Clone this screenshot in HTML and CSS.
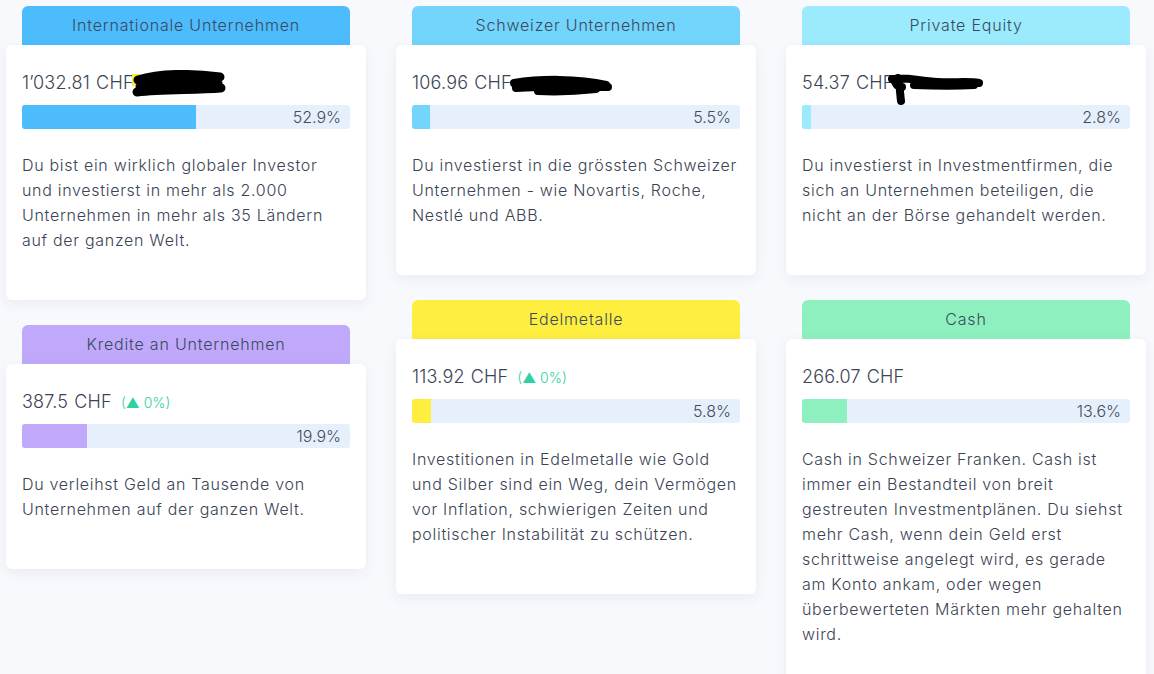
FILE: index.html
```html
<!DOCTYPE html>
<html lang="de">
<head>
    <meta charset="UTF-8">
    <meta name="viewport" content="width=device-width, initial-scale=1.0">
    <title>Portfolio Aufteilung</title>
    <link rel="stylesheet" href="styles.css">
</head>
<body>
    <div class="funds">
        <div class="column">
            <div class="fund">
                <div class="fund-head head-intl">Internationale Unternehmen</div>
                <div class="fund-body">
                    <div class="amount">1’032.81<span class="currency">CHF</span><svg class="scribble scribble-1" width="94" height="28" viewBox="0 0 94 28"><rect x="0" y="4" width="8" height="12" fill="#f4ec3a"/><path d="M6 10 C 25 4, 55 3, 88 7 M8 17 C 30 12, 60 12, 86 13 M5 22 C 30 19, 60 20, 89 18" stroke="#000" stroke-width="9" stroke-linecap="round" fill="none"/></svg></div>
                    <div class="bar">
                        <div class="bar-fill fill-intl" style="width: 52.9%"></div>
                        <span class="bar-label">52.9%</span>
                    </div>
                    <p class="desc">Du bist ein wirklich globaler Investor und investierst in mehr als 2.000 Unternehmen in mehr als 35 Ländern auf der ganzen Welt.</p>
                </div>
            </div>
            <div class="fund">
                <div class="fund-head head-credit">Kredite an Unternehmen</div>
                <div class="fund-body">
                    <div class="amount">387.5<span class="currency">CHF</span><span class="change">(▲ 0%)</span></div>
                    <div class="bar">
                        <div class="bar-fill fill-credit" style="width: 19.9%"></div>
                        <span class="bar-label">19.9%</span>
                    </div>
                    <p class="desc">Du verleihst Geld an Tausende von Unternehmen auf der ganzen Welt.</p>
                </div>
            </div>
        </div>

        <div class="column">
            <div class="fund">
                <div class="fund-head head-swiss">Schweizer Unternehmen</div>
                <div class="fund-body">
                    <div class="amount">106.96<span class="currency">CHF</span><svg class="scribble scribble-2" width="106" height="22" viewBox="0 0 106 22"><path d="M6 9 C 30 5, 70 4, 98 11 M8 14 C 40 12, 70 13, 100 13 M30 17 C 50 18, 70 17, 88 15" stroke="#000" stroke-width="8" stroke-linecap="round" fill="none"/></svg></div>
                    <div class="bar">
                        <div class="bar-fill fill-swiss" style="width: 5.5%"></div>
                        <span class="bar-label">5.5%</span>
                    </div>
                    <p class="desc">Du investierst in die grössten Schweizer Unternehmen - wie Novartis, Roche, Nestlé und ABB.</p>
                </div>
            </div>
            <div class="fund">
                <div class="fund-head head-metal">Edelmetalle</div>
                <div class="fund-body">
                    <div class="amount">113.92<span class="currency">CHF</span><span class="change">(▲ 0%)</span></div>
                    <div class="bar">
                        <div class="bar-fill fill-metal" style="width: 5.8%"></div>
                        <span class="bar-label">5.8%</span>
                    </div>
                    <p class="desc">Investitionen in Edelmetalle wie Gold und Silber sind ein Weg, dein Vermögen vor Inflation, schwierigen Zeiten und politischer Instabilität zu schützen.</p>
                </div>
            </div>
        </div>

        <div class="column">
            <div class="fund">
                <div class="fund-head head-pe">Private Equity</div>
                <div class="fund-body">
                    <div class="amount">54.37<span class="currency">CHF</span><svg class="scribble scribble-3" width="96" height="34" viewBox="0 0 96 34"><path d="M4 7 C 20 5, 30 9, 50 10 C 65 11, 80 9, 91 11 M26 13 C 50 14, 70 14, 86 13 M10 6 C 12 14, 12 22, 13 29 M6 8 C 8 12, 9 15, 14 15" stroke="#000" stroke-width="8" stroke-linecap="round" fill="none"/></svg></div>
                    <div class="bar">
                        <div class="bar-fill fill-pe" style="width: 2.8%"></div>
                        <span class="bar-label">2.8%</span>
                    </div>
                    <p class="desc">Du investierst in Investmentfirmen, die sich an Unternehmen beteiligen, die nicht an der Börse gehandelt werden.</p>
                </div>
            </div>
            <div class="fund">
                <div class="fund-head head-cash">Cash</div>
                <div class="fund-body">
                    <div class="amount">266.07<span class="currency">CHF</span></div>
                    <div class="bar">
                        <div class="bar-fill fill-cash" style="width: 13.6%"></div>
                        <span class="bar-label">13.6%</span>
                    </div>
                    <p class="desc">Cash in Schweizer Franken. Cash ist immer ein Bestandteil von breit gestreuten Investmentplänen. Du siehst mehr Cash, wenn dein Geld erst schrittweise angelegt wird, es gerade am Konto ankam, oder wegen überbewerteten Märkten mehr gehalten wird.</p>
                </div>
            </div>
        </div>
    </div>
</body>
</html>
```

FILE: styles.css
```css
body {
    margin: 0;
    background-color: #f8f9fd;
    font-family: Inter, "Open Sans", sans-serif;
    font-weight: 300;
    color: #3b4354;
}
.funds {
    display: flex;
    gap: 30px;
    padding: 6px;
    align-items: flex-start;
}
.column {
    width: 360px;
    display: flex;
    flex-direction: column;
    gap: 25px;
}
.fund-head {
    margin: 0 16px;
    height: 39px;
    line-height: 39px;
    text-align: center;
    font-size: 16px;
    letter-spacing: 0.8px;
    color: #3a4a5e;
    border-radius: 6px 6px 0 0;
}
.head-intl { background-color: #4dbcfd; }
.head-swiss { background-color: #73d4fc; }
.head-pe { background-color: #9bebfc; }
.head-credit { background-color: #c0a9fb; }
.head-metal { background-color: #fdee40; }
.head-cash { background-color: #8ff0bf; }

.fund-body {
    background-color: #fff;
    border-radius: 6px;
    padding: 24px 16px 47px;
    box-shadow: 0 4px 14px rgba(40, 50, 90, 0.07);
}
.amount {
    height: 28px;
    line-height: 28px;
    font-size: 18px;
    letter-spacing: 0.2px;
    color: #3b4354;
    margin-bottom: 8px;
    white-space: nowrap;
}
.currency {
    margin-left: 6px;
}
.change {
    margin-left: 9px;
    font-size: 14px;
    letter-spacing: 0;
    color: #2fd19f;
}
.scribble {
    position: relative;
    vertical-align: top;
}
.scribble-1 {
    top: 1px;
    margin-left: -2px;
}
.scribble-2 {
    top: 5px;
    margin-left: -4px;
}
.scribble-3 {
    top: 3px;
    margin-left: -6px;
}
.bar {
    position: relative;
    height: 24px;
    background-color: #e6f0fd;
    border-radius: 3px;
    overflow: hidden;
}
.bar-fill {
    height: 100%;
}
.fill-intl { background-color: #4dbcfd; }
.fill-swiss { background-color: #73d4fc; }
.fill-pe { background-color: #9bebfc; }
.fill-credit { background-color: #c0a9fb; }
.fill-metal { background-color: #fdee40; }
.fill-cash { background-color: #8ff0bf; }

.bar-label {
    position: absolute;
    right: 9px;
    top: 0;
    line-height: 24px;
    font-size: 16px;
    color: #454c5c;
}
.desc {
    margin: 24px 0 0;
    font-size: 16px;
    line-height: 25px;
    letter-spacing: 0.7px;
}
```
